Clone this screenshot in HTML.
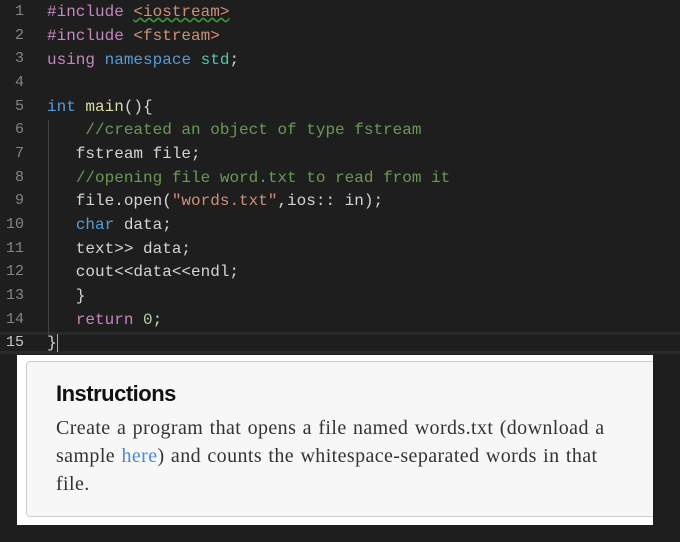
<!DOCTYPE html>
<html><head><style>
body{margin:0;width:680px;height:542px;background:#1e1e1e;overflow:hidden;position:relative;font-family:"Liberation Mono",monospace}
.ln{position:absolute;left:0;width:24px;text-align:right;color:#858585;font-size:15px}
.c{position:absolute;left:47px;font-size:16px;color:#d4d4d4;white-space:pre;line-height:20px}
.k{color:#c586c0}.s{color:#ce9178}.b{color:#569cd6}.t{color:#4ec9b0}.f{color:#dcdcaa}.g{color:#6a9955}.v{color:#9cdcfe}.n{color:#b5cea8}
.panel{position:absolute;left:17px;top:355px;width:636px;height:170px;background:#fff;overflow:hidden}
.card{position:absolute;left:9px;top:6px;width:640px;height:154px;background:#f7f7f7;border:1px solid #ccc;border-radius:4px}
h1{position:absolute;left:29px;top:19px;margin:0;font:bold 22px "Liberation Sans",sans-serif;color:#111;letter-spacing:-0.5px}
p{position:absolute;left:29px;top:52px;margin:0;width:560px;font:20px/28px "Liberation Serif",serif;letter-spacing:0.4px;word-spacing:1px;color:#333}
a{color:#4a8ad4;text-decoration:none}
</style></head><body>
<div style="position:absolute;left:0;top:332px;width:680px;height:22px;border-top:3px solid #2a2a2a;border-bottom:3px solid #2a2a2a;box-sizing:border-box"></div>
<div style="position:absolute;left:48px;top:120px;width:1px;height:215px;background:#404040"></div>
<div class="ln" style="top:3px">1</div><div class="ln" style="top:27px">2</div><div class="ln" style="top:50px">3</div><div class="ln" style="top:74px">4</div><div class="ln" style="top:98px">5</div><div class="ln" style="top:121px">6</div><div class="ln" style="top:145px">7</div><div class="ln" style="top:169px">8</div><div class="ln" style="top:192px">9</div><div class="ln" style="top:216px">10</div><div class="ln" style="top:240px">11</div><div class="ln" style="top:263px">12</div><div class="ln" style="top:287px">13</div><div class="ln" style="top:311px">14</div><div class="ln" style="top:334px;color:#c6c6c6">15</div>
<div class="c" style="top:2px"><span class="k">#include</span> <span class="s" style="text-decoration:underline wavy #3a9a3a">&lt;iostream&gt;</span></div>
<div class="c" style="top:26px"><span class="k">#include</span> <span class="s">&lt;fstream&gt;</span></div>
<div class="c" style="top:50px"><span class="k">using</span> <span class="b">namespace</span> <span class="t">std</span>;</div>
<div class="c" style="top:97px"><span class="b">int</span> <span class="f">main</span>(){</div>
<div class="c" style="top:120px">    <span class="g">//created an object of type fstream</span></div>
<div class="c" style="top:144px">   fstream file;</div>
<div class="c" style="top:168px">   <span class="g">//opening file word.txt to read from it</span></div>
<div class="c" style="top:191px">   file.open(<span class="s">"words.txt"</span>,ios:: in);</div>
<div class="c" style="top:215px">   <span class="b">char</span> data;</div>
<div class="c" style="top:239px">   text&gt;&gt; data;</div>
<div class="c" style="top:262px">   cout&lt;&lt;data&lt;&lt;endl;</div>
<div class="c" style="top:286px">   }</div>
<div class="c" style="top:310px">   <span class="k">return</span> <span class="n">0</span>;</div>
<div class="c" style="top:333px">}<span style="display:inline-block;width:1px;height:18px;background:#aeafad;vertical-align:middle"></span></div>
<div class="panel"><div class="card">
<h1>Instructions</h1>
<p>Create a program that opens a file named words.txt (download a sample <a>here</a>) and counts the whitespace-separated words in that file.</p>
</div></div>
</body></html>
